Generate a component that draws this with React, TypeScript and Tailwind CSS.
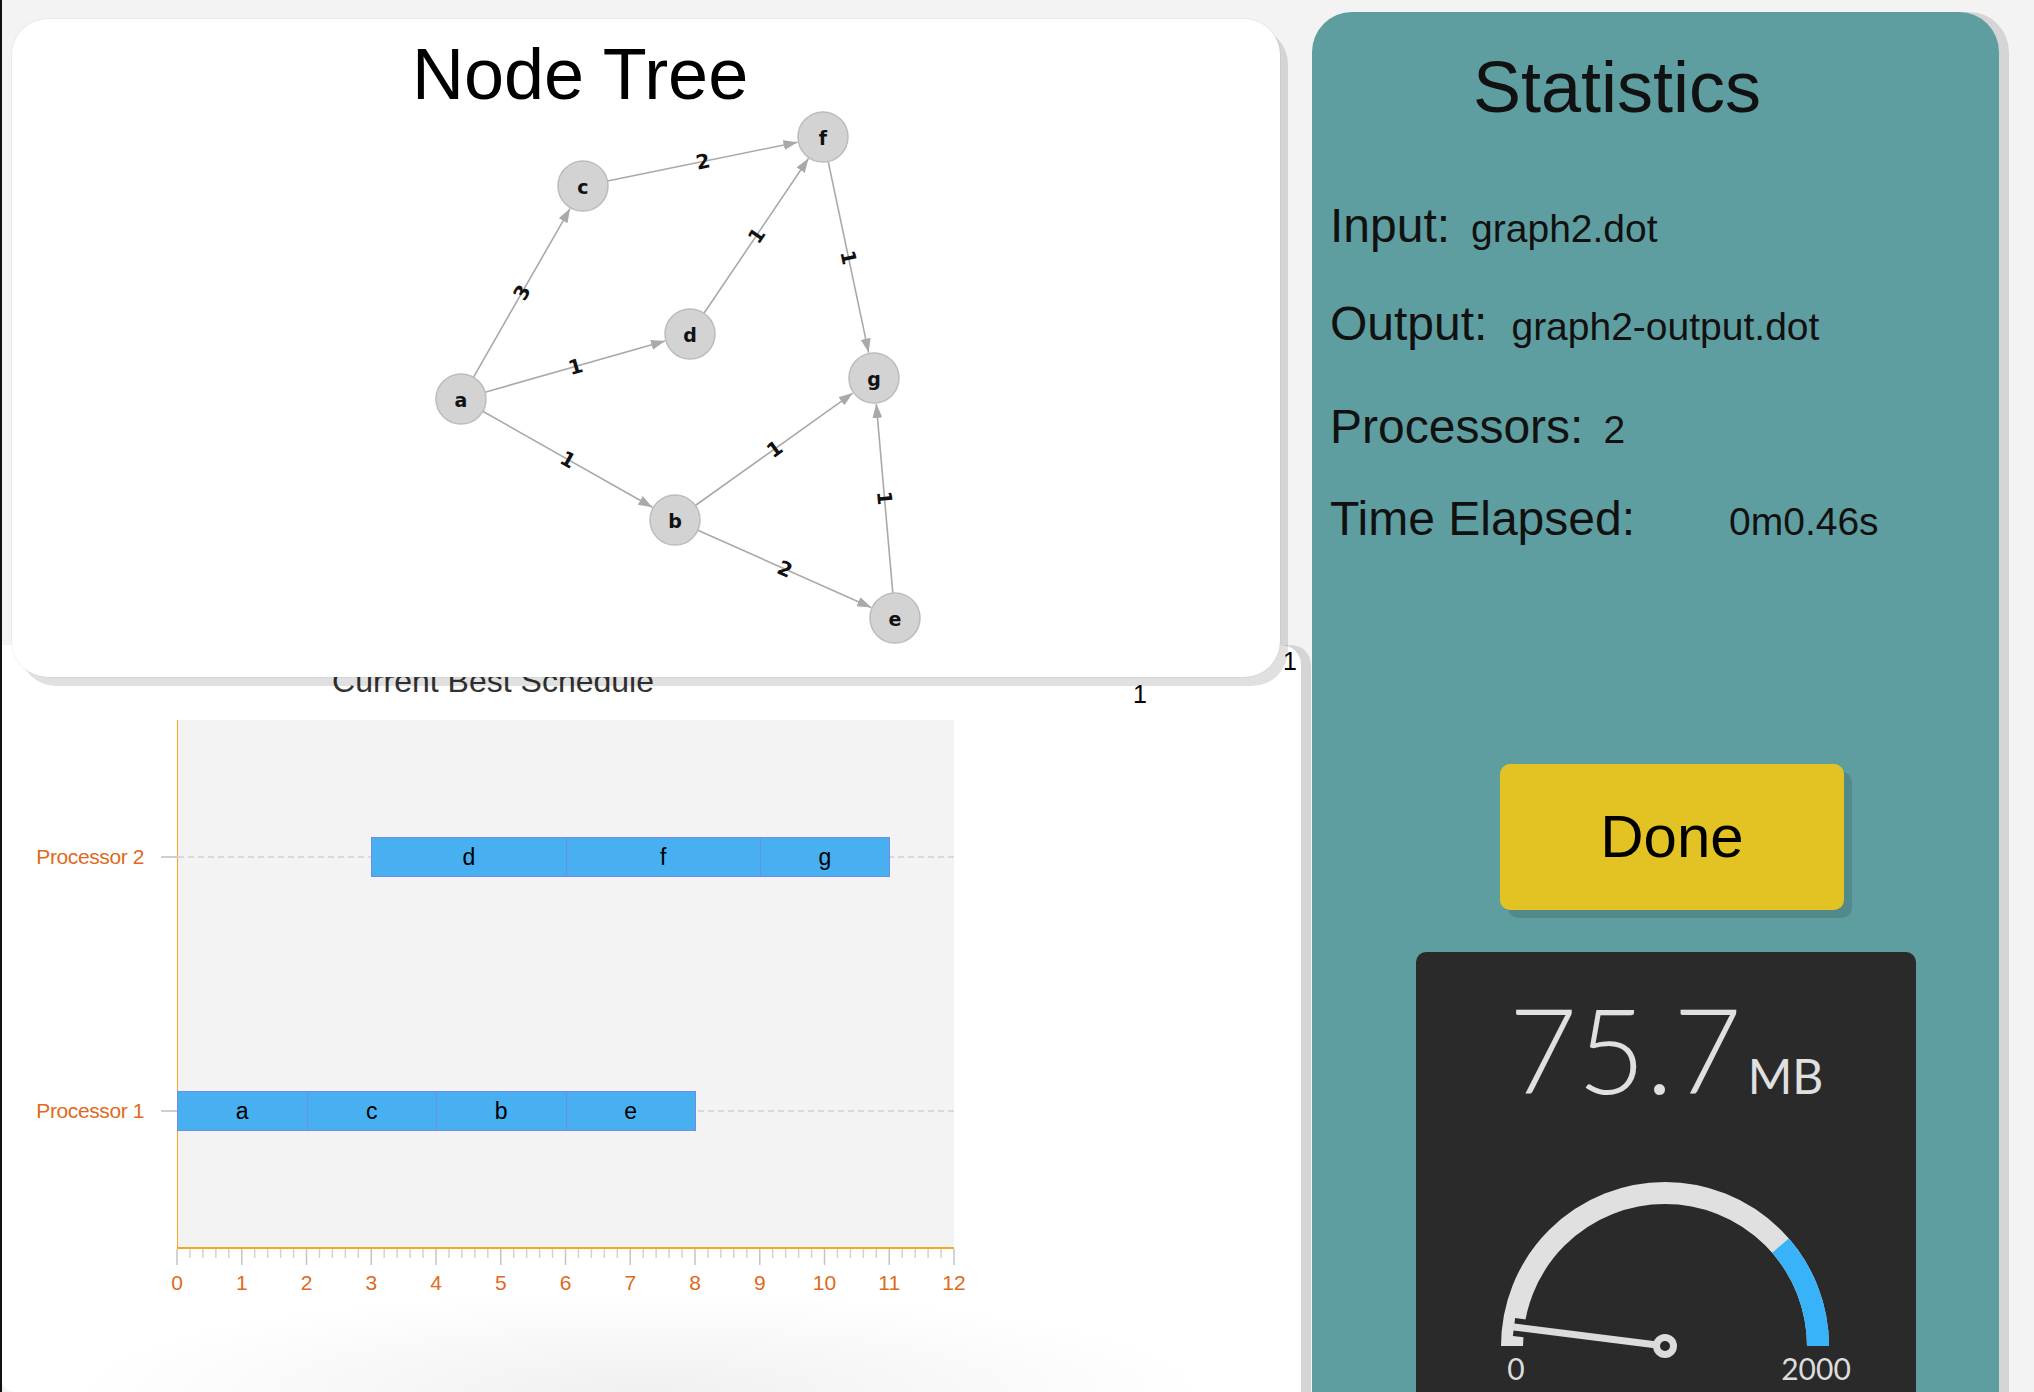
import React from "react";

const NODES: Record<string, [number, number]> = {
  a: [461, 399],
  b: [675, 520],
  c: [583, 186],
  d: [690, 334],
  e: [895, 618],
  f: [823, 137],
  g: [874, 378],
};

const EDGES: [string, string, number][] = [
  ["a", "c", 3],
  ["a", "d", 1],
  ["a", "b", 1],
  ["c", "f", 2],
  ["d", "f", 1],
  ["f", "g", 1],
  ["b", "g", 1],
  ["b", "e", 2],
  ["e", "g", 1],
];

const UNIT = 64.75;

const ROWS: { label: string; y: number; tasks: [string, number, number][] }[] = [
  {
    label: "Processor 2",
    y: 137,
    tasks: [
      ["d", 3, 6],
      ["f", 6, 9],
      ["g", 9, 11],
    ],
  },
  {
    label: "Processor 1",
    y: 391,
    tasks: [
      ["a", 0, 2],
      ["c", 2, 4],
      ["b", 4, 6],
      ["e", 6, 8],
    ],
  },
];

const NodeGraph = () => {
  const r = 25;
  return (
    <svg width={1268} height={567} viewBox="12 110 1268 567" className="block">
      <defs>
        <marker
          id="arrow"
          viewBox="0 0 14 10"
          refX="14"
          refY="5"
          markerWidth="14"
          markerHeight="10"
          markerUnits="userSpaceOnUse"
          orient="auto"
        >
          <path d="M0 0 L14 5 L0 10 z" fill="#a9a9a9" />
        </marker>
      </defs>
      {EDGES.map(([s, t, w]) => {
        const [x1, y1] = NODES[s];
        const [x2, y2] = NODES[t];
        const dx = x2 - x1;
        const dy = y2 - y1;
        const len = Math.hypot(dx, dy);
        const ux = dx / len;
        const uy = dy / len;
        let ang = (Math.atan2(dy, dx) * 180) / Math.PI;
        if (ang > 90) ang -= 180;
        if (ang < -90) ang += 180;
        const mx = (x1 + x2) / 2;
        const my = (y1 + y2) / 2;
        return (
          <g key={s + t}>
            <line
              x1={x1 + ux * r}
              y1={y1 + uy * r}
              x2={x2 - ux * (r + 1)}
              y2={y2 - uy * (r + 1)}
              stroke="#a9a9a9"
              strokeWidth={1.6}
              markerEnd="url(#arrow)"
            />
            <text
              x={mx}
              y={my}
              transform={`rotate(${ang} ${mx} ${my})`}
              textAnchor="middle"
              dominantBaseline="central"
              fontFamily="'DejaVu Sans', sans-serif"
              fontWeight={700}
              fontSize={20}
              fill="#111"
            >
              {w}
            </text>
          </g>
        );
      })}
      {Object.entries(NODES).map(([id, [x, y]]) => (
        <g key={id}>
          <circle cx={x} cy={y} r={r} fill="#d3d3d3" stroke="#bcbcbc" strokeWidth={1.5} />
          <text
            x={x}
            y={y + 1}
            textAnchor="middle"
            dominantBaseline="central"
            fontFamily="'DejaVu Sans', sans-serif"
            fontWeight={700}
            fontSize={19}
            fill="#111"
          >
            {id}
          </text>
        </g>
      ))}
    </svg>
  );
};

const Schedule = () => {
  return (
    <div className="flex flex-col">
      <p className="w-[982px] pt-[20px] text-center text-[32px] leading-none text-[#333]">
        Current Best Schedule
      </p>
      <div className="mt-[23px] flex">
        <div className="w-[175px] shrink-0" />
        <div className="flex flex-col">
          <div className="relative h-[529px] w-[777px] border-b-2 border-l border-[#f5a623] bg-[#f3f3f3]">
            {ROWS.map((row) => (
              <div key={row.label}>
                <div
                  className="absolute left-0 right-0 border-t-2 border-dashed border-[#dadada]"
                  style={{ top: row.y - 1 }}
                />
                <div
                  className="absolute right-full flex items-center whitespace-nowrap"
                  style={{ top: row.y - 12 }}
                >
                  <span className="text-[21px] leading-[24px] tracking-[-0.4px] text-[#e0691c]">
                    {row.label}
                  </span>
                  <span className="ml-[17px] h-[2px] w-[17px] bg-[#cfcfcf]" />
                </div>
                {row.tasks.map(([name, start, end]) => (
                  <div
                    key={name}
                    className="absolute flex h-[40px] items-center justify-center border border-[#6f8de6] bg-[#48aff0] text-[23px] text-black"
                    style={{
                      top: row.y - 20,
                      left: start * UNIT - 1,
                      width: (end - start) * UNIT + 1,
                    }}
                  >
                    {name}
                  </div>
                ))}
              </div>
            ))}
          </div>
          <svg width={780} height={18} className="-ml-px block">
            {Array.from({ length: 61 }).map((_, i) => {
              const x = 1 + i * (UNIT / 5);
              const major = i % 5 === 0;
              return (
                <line
                  key={i}
                  x1={x}
                  x2={x}
                  y1={0}
                  y2={major ? 16 : 9}
                  stroke={major ? "#c4c4c4" : "#d2d2d2"}
                  strokeWidth={1.5}
                />
              );
            })}
          </svg>
          <div className="relative h-[30px] w-[777px]">
            {Array.from({ length: 13 }).map((_, i) => (
              <span
                key={i}
                className="absolute top-[5px] -translate-x-1/2 text-[21px] leading-none text-[#e0691c]"
                style={{ left: i * UNIT }}
              >
                {i}
              </span>
            ))}
          </div>
        </div>
      </div>
    </div>
  );
};

const Gauge = () => {
  const cx = 249;
  const cy = 394;
  const rr = 153;
  const a = (41 * Math.PI) / 180;
  const bx = cx + rr * Math.cos(a);
  const by = cy - rr * Math.sin(a);
  return (
    <div className="ml-[104px] mt-[42px] h-[460px] w-[500px] shrink-0 rounded-[10px] bg-[#2a2a2a] font-['Lato',sans-serif] text-[#e0e0e0]">
      <div className="flex h-[156px] items-end justify-center">
        <span className="text-[118px] font-light leading-none">75.7</span>
        <span className="mb-[8px] ml-[6px] text-[48px] leading-none">MB</span>
      </div>
      <svg width={500} height={304} viewBox="0 156 500 304" className="block">
        <path
          d={`M ${cx - rr} ${cy} A ${rr} ${rr} 0 0 1 ${cx + rr} ${cy}`}
          fill="none"
          stroke="#e0e0e0"
          strokeWidth={22}
        />
        <path
          d={`M ${bx} ${by} A ${rr} ${rr} 0 0 1 ${cx + rr} ${cy}`}
          fill="none"
          stroke="#38b2f8"
          strokeWidth={22}
        />
        <line x1={cx} y1={cy} x2={98} y2={375} stroke="#2a2a2a" strokeWidth={18} />
        <line x1={cx} y1={cy} x2={98} y2={375} stroke="#dcdcdc" strokeWidth={7} strokeLinecap="round" />
        <circle cx={cx} cy={cy} r={12} fill="#dcdcdc" />
        <circle cx={cx} cy={cy} r={5} fill="#2a2a2a" />
        <text x={100} y={428} textAnchor="middle" fontFamily="Lato, sans-serif" fontSize={30} fill="#dcdcdc">
          0
        </text>
        <text x={400} y={428} textAnchor="middle" fontFamily="Lato, sans-serif" fontSize={30} fill="#dcdcdc">
          2000
        </text>
      </svg>
    </div>
  );
};

const StatRow = ({ label, value, gap, top }: { label: string; value: string; gap: string; top: string }) => (
  <div className={`flex items-baseline pl-[18px] ${top}`}>
    <span className="text-[48px] leading-none text-[#111]">{label}</span>
    <span className={`text-[39px] leading-none text-[#111] ${gap}`}>{value}</span>
  </div>
);

const App = () => {
  return (
    <div className="relative flex h-[1392px] w-[2034px] overflow-hidden bg-[#f3f3f3] font-['Liberation_Sans',Arial,sans-serif]">
      <div className="w-[2px] shrink-0 bg-[#111]" />

      <div className="flex w-[1310px] shrink-0 flex-col">
        <div className="relative z-10 ml-[10px] mt-[19px] h-[658px] w-[1268px] shrink-0 rounded-[36px] bg-white shadow-[8px_9px_0_rgba(0,0,0,0.12),0_0_0_1px_rgba(0,0,0,0.04)]">
          <h1 className="pl-[400px] pt-[19px] text-[72px] leading-none text-black">Node Tree</h1>
          <NodeGraph />
        </div>
        <div className="-mt-[32px] w-[1299px] flex-1 rounded-bl-[12px] rounded-tr-[20px] bg-white bg-[radial-gradient(ellipse_560px_100px_at_640px_100%,#f0f0f0,transparent)] shadow-[10px_0_0_rgba(0,0,0,0.12)]">
          <Schedule />
        </div>
      </div>

      <div className="mt-[12px] flex h-[1400px] w-[687px] shrink-0 flex-col rounded-t-[40px] bg-[#5f9ea0] shadow-[10px_0_0_rgba(0,0,0,0.12)]">
        <h2 className="pl-[161px] pt-[39px] text-[72px] leading-none text-[#111]">Statistics</h2>
        <StatRow label="Input:" value="graph2.dot" gap="ml-[21px]" top="mt-[79px]" />
        <StatRow label="Output:" value="graph2-output.dot" gap="ml-[24px]" top="mt-[50px]" />
        <StatRow label="Processors:" value="2" gap="ml-[20px]" top="mt-[55px]" />
        <StatRow label="Time Elapsed:" value="0m0.46s" gap="ml-[94px]" top="mt-[44px]" />
        <button className="ml-[188px] mt-[221px] flex h-[146px] w-[344px] shrink-0 items-center justify-center rounded-[10px] bg-[#e3c323] text-[60px] text-black shadow-[8px_8px_0_rgba(0,0,0,0.13)]">
          Done
        </button>
        <Gauge />
      </div>

      <span className="absolute left-[1283px] top-[649px] z-20 text-[25px] leading-none text-black">1</span>
      <span className="absolute left-[1133px] top-[682px] z-20 text-[25px] leading-none text-black">1</span>
    </div>
  );
};

export default App;
